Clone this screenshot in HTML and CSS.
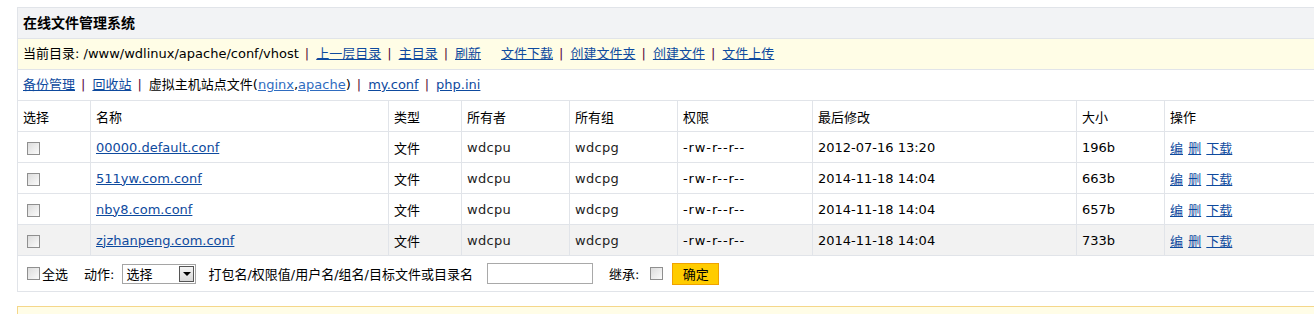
FILE: index.html
```html
<!DOCTYPE html>
<html lang="zh-CN">
<head>
    <meta charset="UTF-8">
    <title>在线文件管理系统</title>
    <link rel="stylesheet" href="styles.css">
</head>
<body>
    <div class="panel">
        <div class="title">在线文件管理系统</div>

        <!-- 当前目录 / 操作 -->
        <div class="path-bar">
            当前目录: /www/wdlinux/apache/conf/vhost<span class="sep">|</span><a href="#">上一层目录</a><span class="sep">|</span><a href="#">主目录</a><span class="sep">|</span><a href="#">刷新</a><a href="#" class="gap">文件下载</a><span class="sep">|</span><a href="#">创建文件夹</a><span class="sep">|</span><a href="#">创建文件</a><span class="sep">|</span><a href="#">文件上传</a>
        </div>

        <div class="link-bar">
            <a href="#">备份管理</a><span class="sep">|</span><a href="#">回收站</a><span class="sep">|</span>虚拟主机站点文件(<a href="#" class="light">nginx</a>,<a href="#" class="light">apache</a>)<span class="sep">|</span><a href="#">my.conf</a><span class="sep">|</span><a href="#">php.ini</a>
        </div>

        <table class="files">
            <colgroup>
                <col style="width:73px">
                <col style="width:298px">
                <col style="width:73px">
                <col style="width:108px">
                <col style="width:108px">
                <col style="width:135px">
                <col style="width:264px">
                <col style="width:88px">
                <col>
            </colgroup>
            <thead>
                <tr>
                    <td>选择</td>
                    <td>名称</td>
                    <td>类型</td>
                    <td>所有者</td>
                    <td>所有组</td>
                    <td>权限</td>
                    <td>最后修改</td>
                    <td>大小</td>
                    <td>操作</td>
                </tr>
            </thead>
            <tbody>
                <tr>
                    <td><input type="checkbox" class="check"></td>
                    <td><a href="#">00000.default.conf</a></td>
                    <td>文件</td>
                    <td class="dim">wdcpu</td>
                    <td class="dim">wdcpg</td>
                    <td class="perm">-rw-r--r--</td>
                    <td>2012-07-16 13:20</td>
                    <td>196b</td>
                    <td class="ops"><a href="#">编</a> <a href="#">删</a> <a href="#">下载</a></td>
                </tr>
                <tr>
                    <td><input type="checkbox" class="check"></td>
                    <td><a href="#">511yw.com.conf</a></td>
                    <td>文件</td>
                    <td class="dim">wdcpu</td>
                    <td class="dim">wdcpg</td>
                    <td class="perm">-rw-r--r--</td>
                    <td>2014-11-18 14:04</td>
                    <td>663b</td>
                    <td class="ops"><a href="#">编</a> <a href="#">删</a> <a href="#">下载</a></td>
                </tr>
                <tr>
                    <td><input type="checkbox" class="check"></td>
                    <td><a href="#">nby8.com.conf</a></td>
                    <td>文件</td>
                    <td class="dim">wdcpu</td>
                    <td class="dim">wdcpg</td>
                    <td class="perm">-rw-r--r--</td>
                    <td>2014-11-18 14:04</td>
                    <td>657b</td>
                    <td class="ops"><a href="#">编</a> <a href="#">删</a> <a href="#">下载</a></td>
                </tr>
                <tr class="hover">
                    <td><input type="checkbox" class="check"></td>
                    <td><a href="#">zjzhanpeng.com.conf</a></td>
                    <td>文件</td>
                    <td class="dim">wdcpu</td>
                    <td class="dim">wdcpg</td>
                    <td class="perm">-rw-r--r--</td>
                    <td>2014-11-18 14:04</td>
                    <td>733b</td>
                    <td class="ops"><a href="#">编</a> <a href="#">删</a> <a href="#">下载</a></td>
                </tr>
            </tbody>
            <tfoot>
                <tr>
                    <td colspan="9">
                        <div class="actions">
                            <label class="all"><input type="checkbox" class="check">全选</label>
                            <span class="label">动作:</span>
                            <div class="select">
                                <span>选择</span>
                                <span class="arrow"></span>
                            </div>
                            <span class="label wide">打包名/权限值/用户名/组名/目标文件或目录名</span>
                            <input type="text" class="text-input">
                            <span class="label inherit">继承:</span>
                            <input type="checkbox" class="check">
                            <button class="ok">确定</button>
                        </div>
                    </td>
                </tr>
            </tfoot>
        </table>
    </div>

    <div class="notice"></div>
</body>
</html>
```

FILE: styles.css
```css
html, body {
    margin: 0;
    padding: 0;
    background: #fff;
    overflow: hidden;
}

body {
    font-family: "DejaVu Sans", "Noto Sans CJK SC", sans-serif;
    font-size: 13px;
    color: #000;
}

a {
    color: #0e4a9e;
    text-decoration: underline;
}

a.light {
    color: #2f6cc0;
}

.panel {
    margin: 7px 0 0 17px;
    width: 1330px;
    border-top: 1px solid #e1e4e9;
    border-left: 1px solid #e1e4e9;
}

.title,
.path-bar,
.link-bar {
    height: 30px;
    line-height: 30px;
    padding-left: 5px;
    border-bottom: 1px solid #e1e4e9;
    white-space: nowrap;
}

.title {
    background: #f2f3f5;
    font-size: 14px;
    font-weight: bold;
}

.path-bar {
    background: #fffde6;
}

.sep {
    color: #5a0a3c;
    margin: 0 7px 0 6px;
}

.gap {
    margin-left: 20px;
}

.files {
    width: 100%;
    table-layout: fixed;
    border-collapse: separate;
    border-spacing: 0;
}

.files td {
    height: 30px;
    padding: 0 5px;
    border-right: 1px solid #e1e4e9;
    border-bottom: 1px solid #e1e4e9;
    white-space: nowrap;
    vertical-align: middle;
}

.files tbody tr.hover td {
    background: #f2f2f2;
}

.files .dim {
    color: #222;
    letter-spacing: 0.3px;
}

.files .perm {
    letter-spacing: 0.9px;
}

.ops a {
    margin-right: 1px;
}

.check {
    -webkit-appearance: none;
    appearance: none;
    width: 13px;
    height: 13px;
    margin: 0 0 0 4px;
    border: 1px solid #8f8f8f;
    background: linear-gradient(135deg, #dcdcdc, #fbfbfb);
    vertical-align: middle;
    box-sizing: border-box;
}

.files tfoot td {
    height: 35px;
}

.actions {
    display: flex;
    align-items: center;
    white-space: nowrap;
}

.all {
    display: flex;
    align-items: center;
    margin-right: 16px;
}

.all .check {
    margin-right: 2px;
}

.label {
    margin-right: 8px;
}

.label.wide {
    margin-left: 12px;
    margin-right: 14px;
}

.label.inherit {
    margin-left: 16px;
    margin-right: 7px;
}

.select {
    display: flex;
    align-items: center;
    justify-content: space-between;
    width: 74px;
    height: 20px;
    box-sizing: border-box;
    border: 1px solid #a5a5a5;
    padding-left: 3px;
}

.arrow {
    position: relative;
    width: 15px;
    height: 16px;
    margin-right: 1px;
    box-sizing: border-box;
    border: 1px solid #555;
    background: linear-gradient(#f4f4f4, #d8d8d8);
}

.arrow::after {
    content: "";
    position: absolute;
    left: 3px;
    top: 5px;
    border-left: 4px solid transparent;
    border-right: 4px solid transparent;
    border-top: 4px solid #000;
}

.text-input {
    width: 106px;
    height: 21px;
    box-sizing: border-box;
    border: 1px solid #a9a9a9;
    padding: 0;
    margin: 0;
}

.ok {
    margin-left: 9px;
    width: 47px;
    height: 22px;
    padding: 0;
    background: #ffcc00;
    border: 1px solid #f0a200;
    font-family: "DejaVu Sans", "Noto Sans CJK SC", sans-serif;
    font-size: 13px;
    color: #000;
}

.notice {
    margin: 14px 0 0 17px;
    width: 1330px;
    height: 30px;
    border-top: 1px solid #f5d78a;
    border-left: 1px solid #f5d78a;
    background: #fffde7;
}
```
